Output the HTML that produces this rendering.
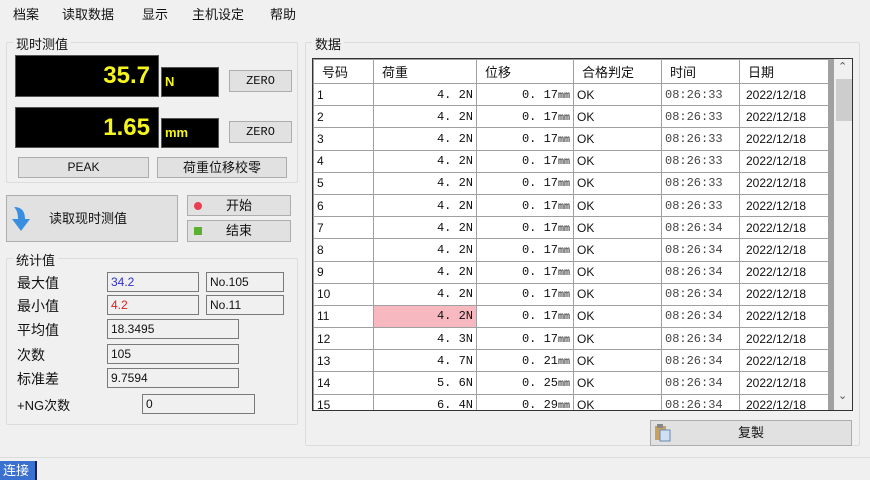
<!DOCTYPE html>
<html><head><meta charset="utf-8"><style>
*{box-sizing:border-box;margin:0;padding:0}
body{width:870px;height:480px;background:#f0f0f0;position:relative;overflow:hidden;font-family:"Liberation Sans","Noto Sans CJK SC",sans-serif;font-size:13px;color:#111}
.a{position:absolute}
.grp{position:absolute;border:1px solid #dcdcdc;border-radius:2px}
.gt{position:absolute;background:#f0f0f0;padding:0 3px;font-size:13px;top:-9px;left:6px}
.disp{position:absolute;background:#000;color:#f5f51e;font-weight:bold;text-align:right;border:1px solid #555}
.btn{position:absolute;background:#e1e1e1;border:1px solid #adadad;text-align:center;font-size:12px}
.fld{position:absolute;border:1px solid #7a7a7a;background:#f0f0f0;font-size:12px;padding-left:3px;line-height:18px}
.lbl{position:absolute;font-size:14px}
table{border-collapse:collapse;font-size:12px;background:#fff}
td{border:1px solid #a0a0a0;height:22.2px;padding:0 3px;white-space:nowrap;overflow:hidden}
th{border:1px solid #a0a0a0;height:24px;font-weight:normal;text-align:left;padding-left:8px;font-size:13px}
.r{text-align:right}
.m{font-family:"Liberation Mono","Noto Sans CJK SC",monospace;letter-spacing:0}
</style></head><body>
<div class="a" style="left:13px;top:4px;font-size:13px;word-spacing:0">档案</div>
<div class="a" style="left:62px;top:4px">读取数据</div>
<div class="a" style="left:142px;top:4px">显示</div>
<div class="a" style="left:192px;top:4px">主机设定</div>
<div class="a" style="left:270px;top:4px">帮助</div>

<div class="grp" style="left:6px;top:42px;width:292px;height:141px"><div class="gt">现时测值</div></div>
<div class="disp" style="left:15px;top:55px;width:144px;height:42px;font-size:24px;line-height:40px;padding-right:8px">35.7</div>
<div class="disp" style="left:161px;top:67px;width:58px;height:30px;text-align:left;font-size:13px;line-height:28px;padding-left:3px">N</div>
<div class="disp" style="left:15px;top:107px;width:144px;height:41px;font-size:24px;line-height:40px;padding-right:8px">1.65</div>
<div class="disp" style="left:161px;top:118px;width:58px;height:30px;text-align:left;font-size:13px;line-height:28px;padding-left:3px">mm</div>
<div class="btn m" style="left:229px;top:70px;width:63px;height:22px;line-height:20px">ZERO</div>
<div class="btn m" style="left:229px;top:121px;width:63px;height:22px;line-height:20px">ZERO</div>
<div class="btn" style="left:18px;top:157px;width:131px;height:21px;line-height:19px">PEAK</div>
<div class="btn" style="left:157px;top:157px;width:130px;height:21px;line-height:19px;font-size:13px">荷重位移校零</div>

<div class="btn" style="left:6px;top:195px;width:172px;height:47px;line-height:45px;font-size:13px;text-align:left;padding-left:42px">读取现时测值</div>
<svg class="a" style="left:11px;top:205px" width="22" height="28" viewBox="0 0 22 28"><path d="M3 2 C12 2 14 8 14 14 L19 14 L10 26 L1 14 L7 14 C7 9 6 5 3 2Z" fill="#3a8ee0"/></svg>
<div class="btn" style="left:187px;top:195px;width:104px;height:21px;line-height:19px;font-size:13px">开始</div>
<div class="a" style="left:194px;top:202px;width:8px;height:8px;border-radius:50%;background:#e84050"></div>
<div class="btn" style="left:187px;top:220px;width:104px;height:22px;line-height:20px;font-size:13px">结束</div>
<div class="a" style="left:194px;top:227px;width:8px;height:8px;background:#5cb030"></div>

<div class="grp" style="left:6px;top:258px;width:292px;height:167px"><div class="gt">统计值</div></div>
<div class="lbl" style="left:17px;top:273px">最大值</div>
<div class="lbl" style="left:17px;top:296px">最小值</div>
<div class="lbl" style="left:17px;top:320px">平均值</div>
<div class="lbl" style="left:17px;top:345px">次数</div>
<div class="lbl" style="left:17px;top:369px">标准差</div>
<div class="lbl" style="left:17px;top:395px;font-size:13px">+NG次数</div>
<div class="fld" style="left:107px;top:272px;width:92px;height:20px;color:#3030d0">34.2</div>
<div class="fld" style="left:206px;top:272px;width:78px;height:20px">No.105</div>
<div class="fld" style="left:107px;top:295px;width:92px;height:20px;color:#e02020">4.2</div>
<div class="fld" style="left:206px;top:295px;width:78px;height:20px">No.11</div>
<div class="fld" style="left:107px;top:319px;width:132px;height:20px">18.3495</div>
<div class="fld" style="left:107px;top:344px;width:132px;height:20px">105</div>
<div class="fld" style="left:107px;top:368px;width:132px;height:20px">9.7594</div>
<div class="fld" style="left:142px;top:394px;width:113px;height:20px">0</div>

<div class="grp" style="left:305px;top:42px;width:555px;height:404px"><div class="gt">数据</div></div>
<div class="a" style="left:312px;top:58px;width:541px;height:353px;border:1px solid #333;background:#fff;overflow:hidden">
<table style="width:516px;table-layout:fixed">
<colgroup><col style="width:60px"><col style="width:103px"><col style="width:97px"><col style="width:88px"><col style="width:78px"><col style="width:90px"></colgroup>
<tr><th>号码</th><th>荷重</th><th>位移</th><th>合格判定</th><th>时间</th><th>日期</th></tr>
</table>
<div id="rows"></div>
<div class="a" style="left:515px;top:0;width:6px;height:353px;background:#a0a0a0"></div>
<div class="a" style="left:521px;top:0;width:19px;height:353px;background:#f0f0f0"></div>
<div class="a" style="left:523px;top:20px;width:16px;height:42px;background:#cdcdcd"></div>
<div class="a" style="left:525px;top:1px;font-size:11px;color:#555">&#8963;</div>
<div class="a" style="left:525px;top:330px;font-size:11px;color:#555">&#8964;</div>
</div>
<script>
var d=[["4.2","0.17","33"],["4.2","0.17","33"],["4.2","0.17","33"],["4.2","0.17","33"],["4.2","0.17","33"],["4.2","0.17","33"],["4.2","0.17","34"],["4.2","0.17","34"],["4.2","0.17","34"],["4.2","0.17","34"],["4.2","0.17","34"],["4.3","0.17","34"],["4.7","0.21","34"],["5.6","0.25","34"],["6.4","0.29","34"]];
var h='<table style="width:516px;table-layout:fixed;margin-top:-1px"><colgroup><col style="width:60px"><col style="width:103px"><col style="width:97px"><col style="width:88px"><col style="width:78px"><col style="width:90px"></colgroup>';
d.forEach(function(r,i){h+='<tr><td>'+(i+1)+'</td><td class="r m"'+(i==10?' style="background:#f8b8c0"':'')+'>'+r[0].replace('.','. ')+'N</td><td class="r m">'+r[1].replace('.','. ')+'<span style="font-size:10px">mm</span></td><td>OK</td><td class="m" style="color:#444">08:26:'+r[2]+'</td><td style="padding-left:6px">2022/12/18</td></tr>';});
document.getElementById('rows').innerHTML=h+'</table>';
</script>
<div class="btn" style="left:650px;top:420px;width:202px;height:26px;line-height:24px;font-size:13px">复製</div>
<svg class="a" style="left:654px;top:424px" width="18" height="18"><rect x="1" y="2" width="11" height="14" fill="#c8a060"/><rect x="3" y="0" width="6" height="4" fill="#888"/><rect x="6" y="6" width="10" height="11" fill="#cfe0f4" stroke="#6a8ab0"/></svg>

<div class="a" style="left:0;top:457px;width:870px;height:1px;background:#dcdcdc"></div>
<div class="a" style="left:0;top:461px;width:37px;height:19px;background:#3a70d0;color:#fff;font-size:13px;line-height:19px;padding-left:3px;border-right:2px solid #224">连接</div>
</body></html>
